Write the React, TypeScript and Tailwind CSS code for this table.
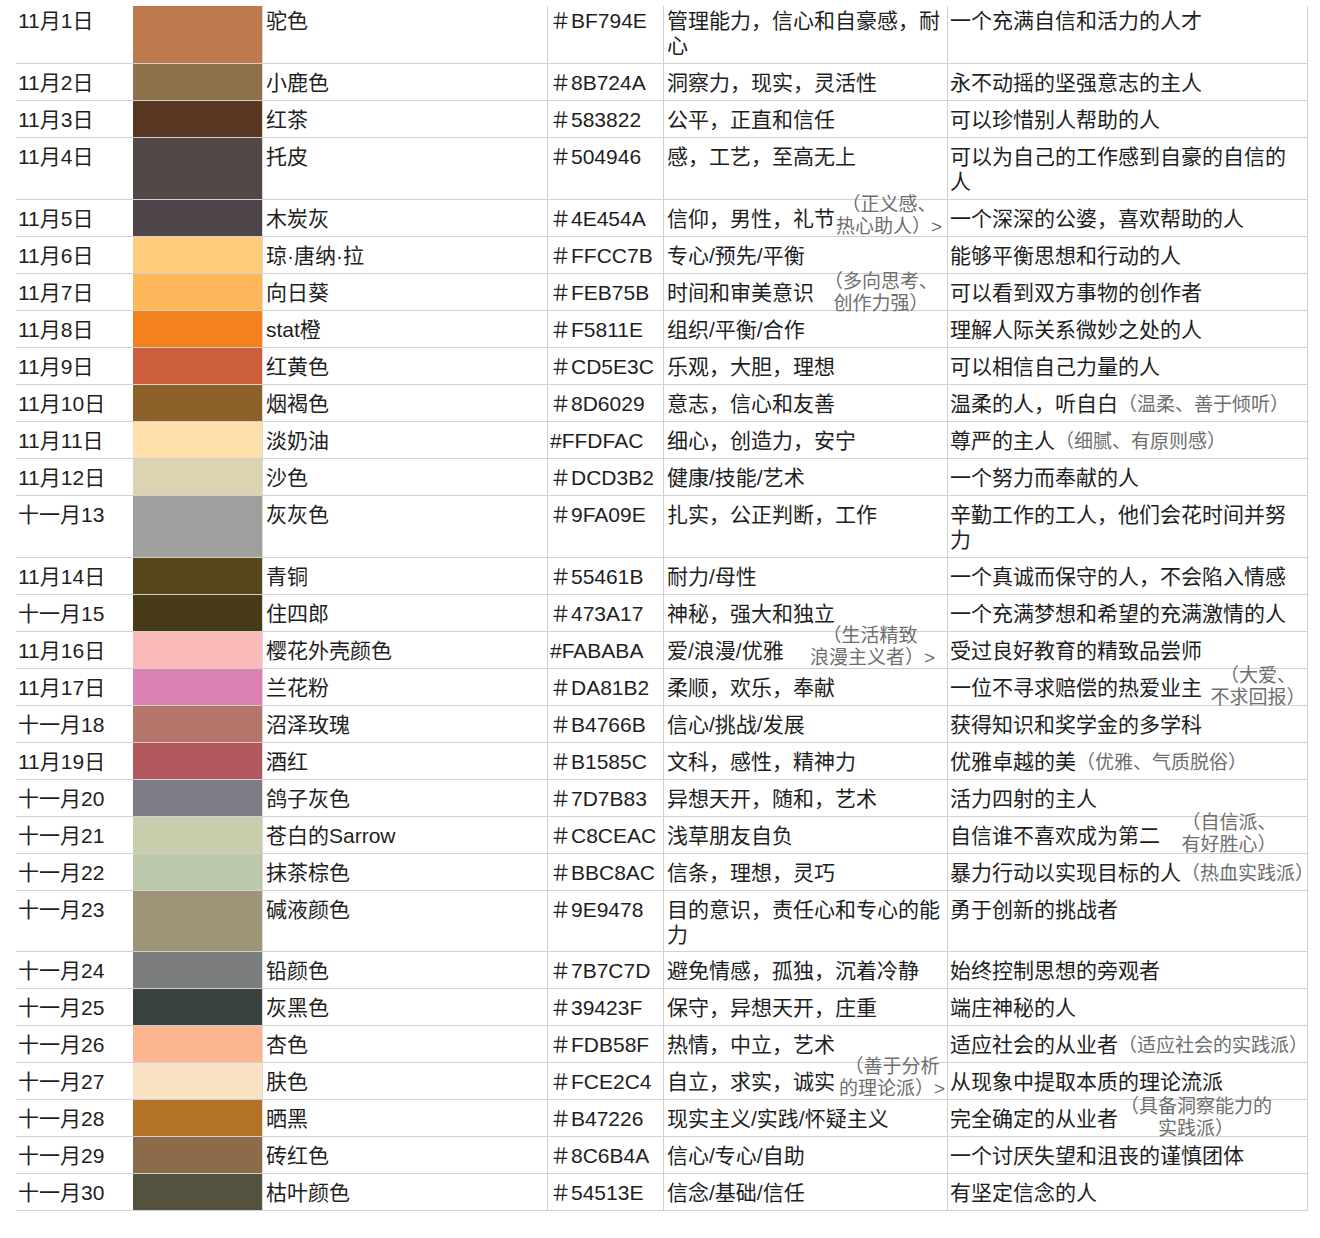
import React from "react";

type Ann = { lines: [string, string]; cls: string };
type Row = {
  date: string;
  sw: string;
  name: string;
  hex: string;
  kw: string;
  desc: string;
  descInline?: string;
  kwAnn?: Ann;
  descAnn?: Ann;
};

const rows: Row[] = [
  { date: "11月1日", sw: "bg-[#BF794E]", name: "驼色", hex: "＃BF794E", kw: "管理能力，信心和自豪感，耐心", desc: "一个充满自信和活力的人才" },
  { date: "11月2日", sw: "bg-[#8B724A]", name: "小鹿色", hex: "＃8B724A", kw: "洞察力，现实，灵活性", desc: "永不动摇的坚强意志的主人" },
  { date: "11月3日", sw: "bg-[#583822]", name: "红茶", hex: "＃583822", kw: "公平，正直和信任", desc: "可以珍惜别人帮助的人" },
  { date: "11月4日", sw: "bg-[#504946]", name: "托皮", hex: "＃504946", kw: "感，工艺，至高无上", desc: "可以为自己的工作感到自豪的自信的人" },
  {
    date: "11月5日", sw: "bg-[#4E454A]", name: "木炭灰", hex: "＃4E454A", kw: "信仰，男性，礼节", desc: "一个深深的公婆，喜欢帮助的人",
    kwAnn: { lines: ["（正义感、", "热心助人）>"], cls: "left-[165px] -top-[6px] w-[120px]" },
  },
  { date: "11月6日", sw: "bg-[#FFCC7B]", name: "琼·唐纳·拉", hex: "＃FFCC7B", kw: "专心/预先/平衡", desc: "能够平衡思想和行动的人" },
  {
    date: "11月7日", sw: "bg-[#FEB75B]", name: "向日葵", hex: "＃FEB75B", kw: "时间和审美意识", desc: "可以看到双方事物的创作者",
    kwAnn: { lines: ["（多向思考、", "创作力强）"], cls: "left-[157px] -top-[3px] w-[120px]" },
  },
  { date: "11月8日", sw: "bg-[#F5811E]", name: "stat橙", hex: "＃F5811E", kw: "组织/平衡/合作", desc: "理解人际关系微妙之处的人" },
  { date: "11月9日", sw: "bg-[#CD5E3C]", name: "红黄色", hex: "＃CD5E3C", kw: "乐观，大胆，理想", desc: "可以相信自己力量的人" },
  { date: "11月10日", sw: "bg-[#8D6029]", name: "烟褐色", hex: "＃8D6029", kw: "意志，信心和友善", desc: "温柔的人，听自白", descInline: "（温柔、善于倾听）" },
  { date: "11月11日", sw: "bg-[#FFDFAC]", name: "淡奶油", hex: "#FFDFAC", kw: "细心，创造力，安宁", desc: "尊严的主人", descInline: "（细腻、有原则感）" },
  { date: "11月12日", sw: "bg-[#DCD3B2]", name: "沙色", hex: "＃DCD3B2", kw: "健康/技能/艺术", desc: "一个努力而奉献的人" },
  { date: "十一月13", sw: "bg-[#9FA09E]", name: "灰灰色", hex: "＃9FA09E", kw: "扎实，公正判断，工作", desc: "辛勤工作的工人，他们会花时间并努力" },
  { date: "11月14日", sw: "bg-[#55461B]", name: "青铜", hex: "＃55461B", kw: "耐力/母性", desc: "一个真诚而保守的人，不会陷入情感" },
  { date: "十一月15", sw: "bg-[#473A17]", name: "住四郎", hex: "＃473A17", kw: "神秘，强大和独立", desc: "一个充满梦想和希望的充满激情的人" },
  {
    date: "11月16日", sw: "bg-[#FABABA]", name: "樱花外壳颜色", hex: "#FABABA", kw: "爱/浪漫/优雅", desc: "受过良好教育的精致品尝师",
    kwAnn: { lines: ["（生活精致", "浪漫主义者）>"], cls: "left-[146px] -top-[7px] w-[120px]" },
  },
  {
    date: "11月17日", sw: "bg-[#DA81B2]", name: "兰花粉", hex: "＃DA81B2", kw: "柔顺，欢乐，奉献", desc: "一位不寻求赔偿的热爱业主",
    descAnn: { lines: ["（大爱、", "不求回报）"], cls: "left-[260px] -top-[4px] w-[100px]" },
  },
  { date: "十一月18", sw: "bg-[#B4766B]", name: "沼泽玫瑰", hex: "＃B4766B", kw: "信心/挑战/发展", desc: "获得知识和奖学金的多学科" },
  { date: "11月19日", sw: "bg-[#B1585C]", name: "酒红", hex: "＃B1585C", kw: "文科，感性，精神力", desc: "优雅卓越的美", descInline: "（优雅、气质脱俗）" },
  { date: "十一月20", sw: "bg-[#7D7B83]", name: "鸽子灰色", hex: "＃7D7B83", kw: "异想天开，随和，艺术", desc: "活力四射的主人" },
  {
    date: "十一月21", sw: "bg-[#C8CEAC]", name: "苍白的Sarrow", hex: "＃C8CEAC", kw: "浅草朋友自负", desc: "自信谁不喜欢成为第二",
    descAnn: { lines: ["（自信派、", "有好胜心）"], cls: "left-[231px] -top-[5px] w-[100px]" },
  },
  { date: "十一月22", sw: "bg-[#BBC8AC]", name: "抹茶棕色", hex: "＃BBC8AC", kw: "信条，理想，灵巧", desc: "暴力行动以实现目标的人", descInline: "（热血实践派）" },
  { date: "十一月23", sw: "bg-[#9E9478]", name: "碱液颜色", hex: "＃9E9478", kw: "目的意识，责任心和专心的能力", desc: "勇于创新的挑战者" },
  { date: "十一月24", sw: "bg-[#7B7C7D]", name: "铅颜色", hex: "＃7B7C7D", kw: "避免情感，孤独，沉着冷静", desc: "始终控制思想的旁观者" },
  { date: "十一月25", sw: "bg-[#39423F]", name: "灰黑色", hex: "＃39423F", kw: "保守，异想天开，庄重", desc: "端庄神秘的人" },
  { date: "十一月26", sw: "bg-[#FDB58F]", name: "杏色", hex: "＃FDB58F", kw: "热情，中立，艺术", desc: "适应社会的从业者", descInline: "（适应社会的实践派）" },
  {
    date: "十一月27", sw: "bg-[#FCE2C4]", name: "肤色", hex: "＃FCE2C4", kw: "自立，求实，诚实", desc: "从现象中提取本质的理论流派",
    kwAnn: { lines: ["（善于分析", "的理论派）>"], cls: "left-[168px] -top-[7px] w-[120px]" },
  },
  {
    date: "十一月28", sw: "bg-[#B47226]", name: "晒黑", hex: "＃B47226", kw: "现实主义/实践/怀疑主义", desc: "完全确定的从业者",
    descAnn: { lines: ["（具备洞察能力的", "实践派）"], cls: "left-[168px] -top-[4px] w-[160px]" },
  },
  { date: "十一月29", sw: "bg-[#8C6B4A]", name: "砖红色", hex: "＃8C6B4A", kw: "信心/专心/自助", desc: "一个讨厌失望和沮丧的谨慎团体" },
  { date: "十一月30", sw: "bg-[#54513E]", name: "枯叶颜色", hex: "＃54513E", kw: "信念/基础/信任", desc: "有坚定信念的人" },
];

function Annotation({ ann }: { ann: Ann }) {
  return (
    <div
      className={`absolute text-center text-[19px] leading-[22px] text-[#6e6e6e] whitespace-nowrap ${ann.cls}`}
    >
      <div>{ann.lines[0]}</div>
      <div>{ann.lines[1]}</div>
    </div>
  );
}

export default function App() {
  return (
    <div className="min-h-[1238px] bg-white pt-[6px] pl-4 text-[21px] leading-[25px] text-[#1e1e1e] [font-family:'Liberation_Sans','Noto_Sans_CJK_SC',sans-serif]">
      <div className="w-[1292px]">
        {rows.map((r, i) => {
          const pad =
            i === 0
              ? "pt-[2px] pb-[5px]"
              : i === 22
              ? "pt-[6px] pb-[4px]"
              : "pt-[6px] pb-[5px]";
          return (
            <div
              key={i}
              className="grid grid-cols-[117px_129px_285px_116px_284px_361px] border-b border-[#d0d0d0]"
            >
              <div className={`pl-[2px] ${pad}`}>{r.date}</div>
              <div className={r.sw} />
              <div className={`border-l border-[#d8d8d8] pl-[3px] ${pad}`}>{r.name}</div>
              <div className={`border-l border-[#d0d0d0] pl-[2px] whitespace-nowrap ${pad}`}>{r.hex}</div>
              <div className={`relative border-l border-[#d0d0d0] pl-[3px] pr-[2px] ${pad}`}>
                {r.kw}
                {r.kwAnn && <Annotation ann={r.kwAnn} />}
              </div>
              <div
                className={`relative border-l border-r border-[#d0d0d0] pl-[2px] pr-[3px] ${pad} ${
                  r.descInline ? "whitespace-nowrap" : ""
                }`}
              >
                {r.desc}
                {r.descInline && (
                  <span className="text-[19px] leading-none text-[#6e6e6e]">{r.descInline}</span>
                )}
                {r.descAnn && <Annotation ann={r.descAnn} />}
              </div>
            </div>
          );
        })}
      </div>
    </div>
  );
}
